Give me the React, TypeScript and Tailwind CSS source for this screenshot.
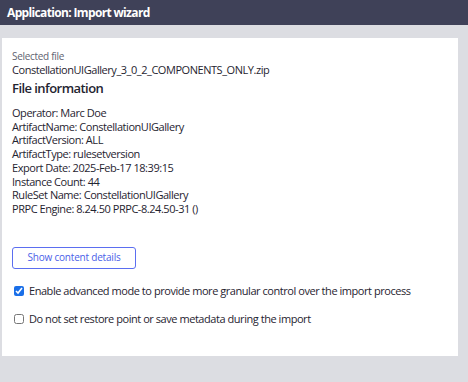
import React from "react";

export default function App() {
  const lines = [
    "Operator: Marc Doe",
    "ArtifactName: ConstellationUIGallery",
    "ArtifactVersion: ALL",
    "ArtifactType: rulesetversion",
    "Export Date: 2025-Feb-17 18:39:15",
    "Instance Count: 44",
    "RuleSet Name: ConstellationUIGallery",
    "PRPC Engine: 8.24.50 PRPC-8.24.50-31 ()",
  ];
  return (
    <div
      className="w-[468px] h-[382px] bg-[#dcdde2] overflow-hidden"
      style={{ fontFamily: '"Open Sans", "Noto Sans", sans-serif' }}
    >
      <div className="h-[25px] bg-[#3f4158] flex items-center pl-[7px]">
        <span className="text-white text-[12px] font-bold tracking-[-0.65px]">Application: Import wizard</span>
      </div>
      <div className="mt-[13px] ml-[2px] w-[456px] h-[318px] bg-white pl-[10px] pt-[12px] text-[#1f2430]">
        <div className="text-[10px] leading-[13px] text-[#5f6270] tracking-[-0.3px]">Selected file</div>
        <div className="text-[11px] leading-[14px] tracking-[-0.45px]">ConstellationUIGallery_3_0_2_COMPONENTS_ONLY.zip</div>
        <div className="text-[13px] leading-[18px] mt-[2px] font-semibold tracking-[-0.55px]">File information</div>
        <div className="mt-[9px] flex flex-col">
          {lines.map((l) => (
            <div key={l} className="text-[11px] leading-[13.7px] tracking-[-0.45px]">{l}</div>
          ))}
        </div>
        <button className="mt-[31px] w-[124px] h-[22px] border border-[#5b6ef0] rounded-[3px] text-[10px] tracking-[-0.2px] text-[#4a5ee8] flex items-center justify-center">
          Show content details
        </button>
        <label className="mt-[15px] flex items-center gap-[5px] text-[11px] leading-[14px] tracking-[-0.45px]">
          <input type="checkbox" defaultChecked className="w-[10px] h-[10px] ml-[2px] accent-[#1a6fe8]" />
          <span>Enable advanced mode to provide more granular control over the import process</span>
        </label>
        <label className="mt-[14px] flex items-center gap-[5px] text-[11px] leading-[14px] tracking-[-0.45px]">
          <input type="checkbox" className="w-[10px] h-[10px] ml-[2px]" />
          <span>Do not set restore point or save metadata during the import</span>
        </label>
      </div>
    </div>
  );
}
